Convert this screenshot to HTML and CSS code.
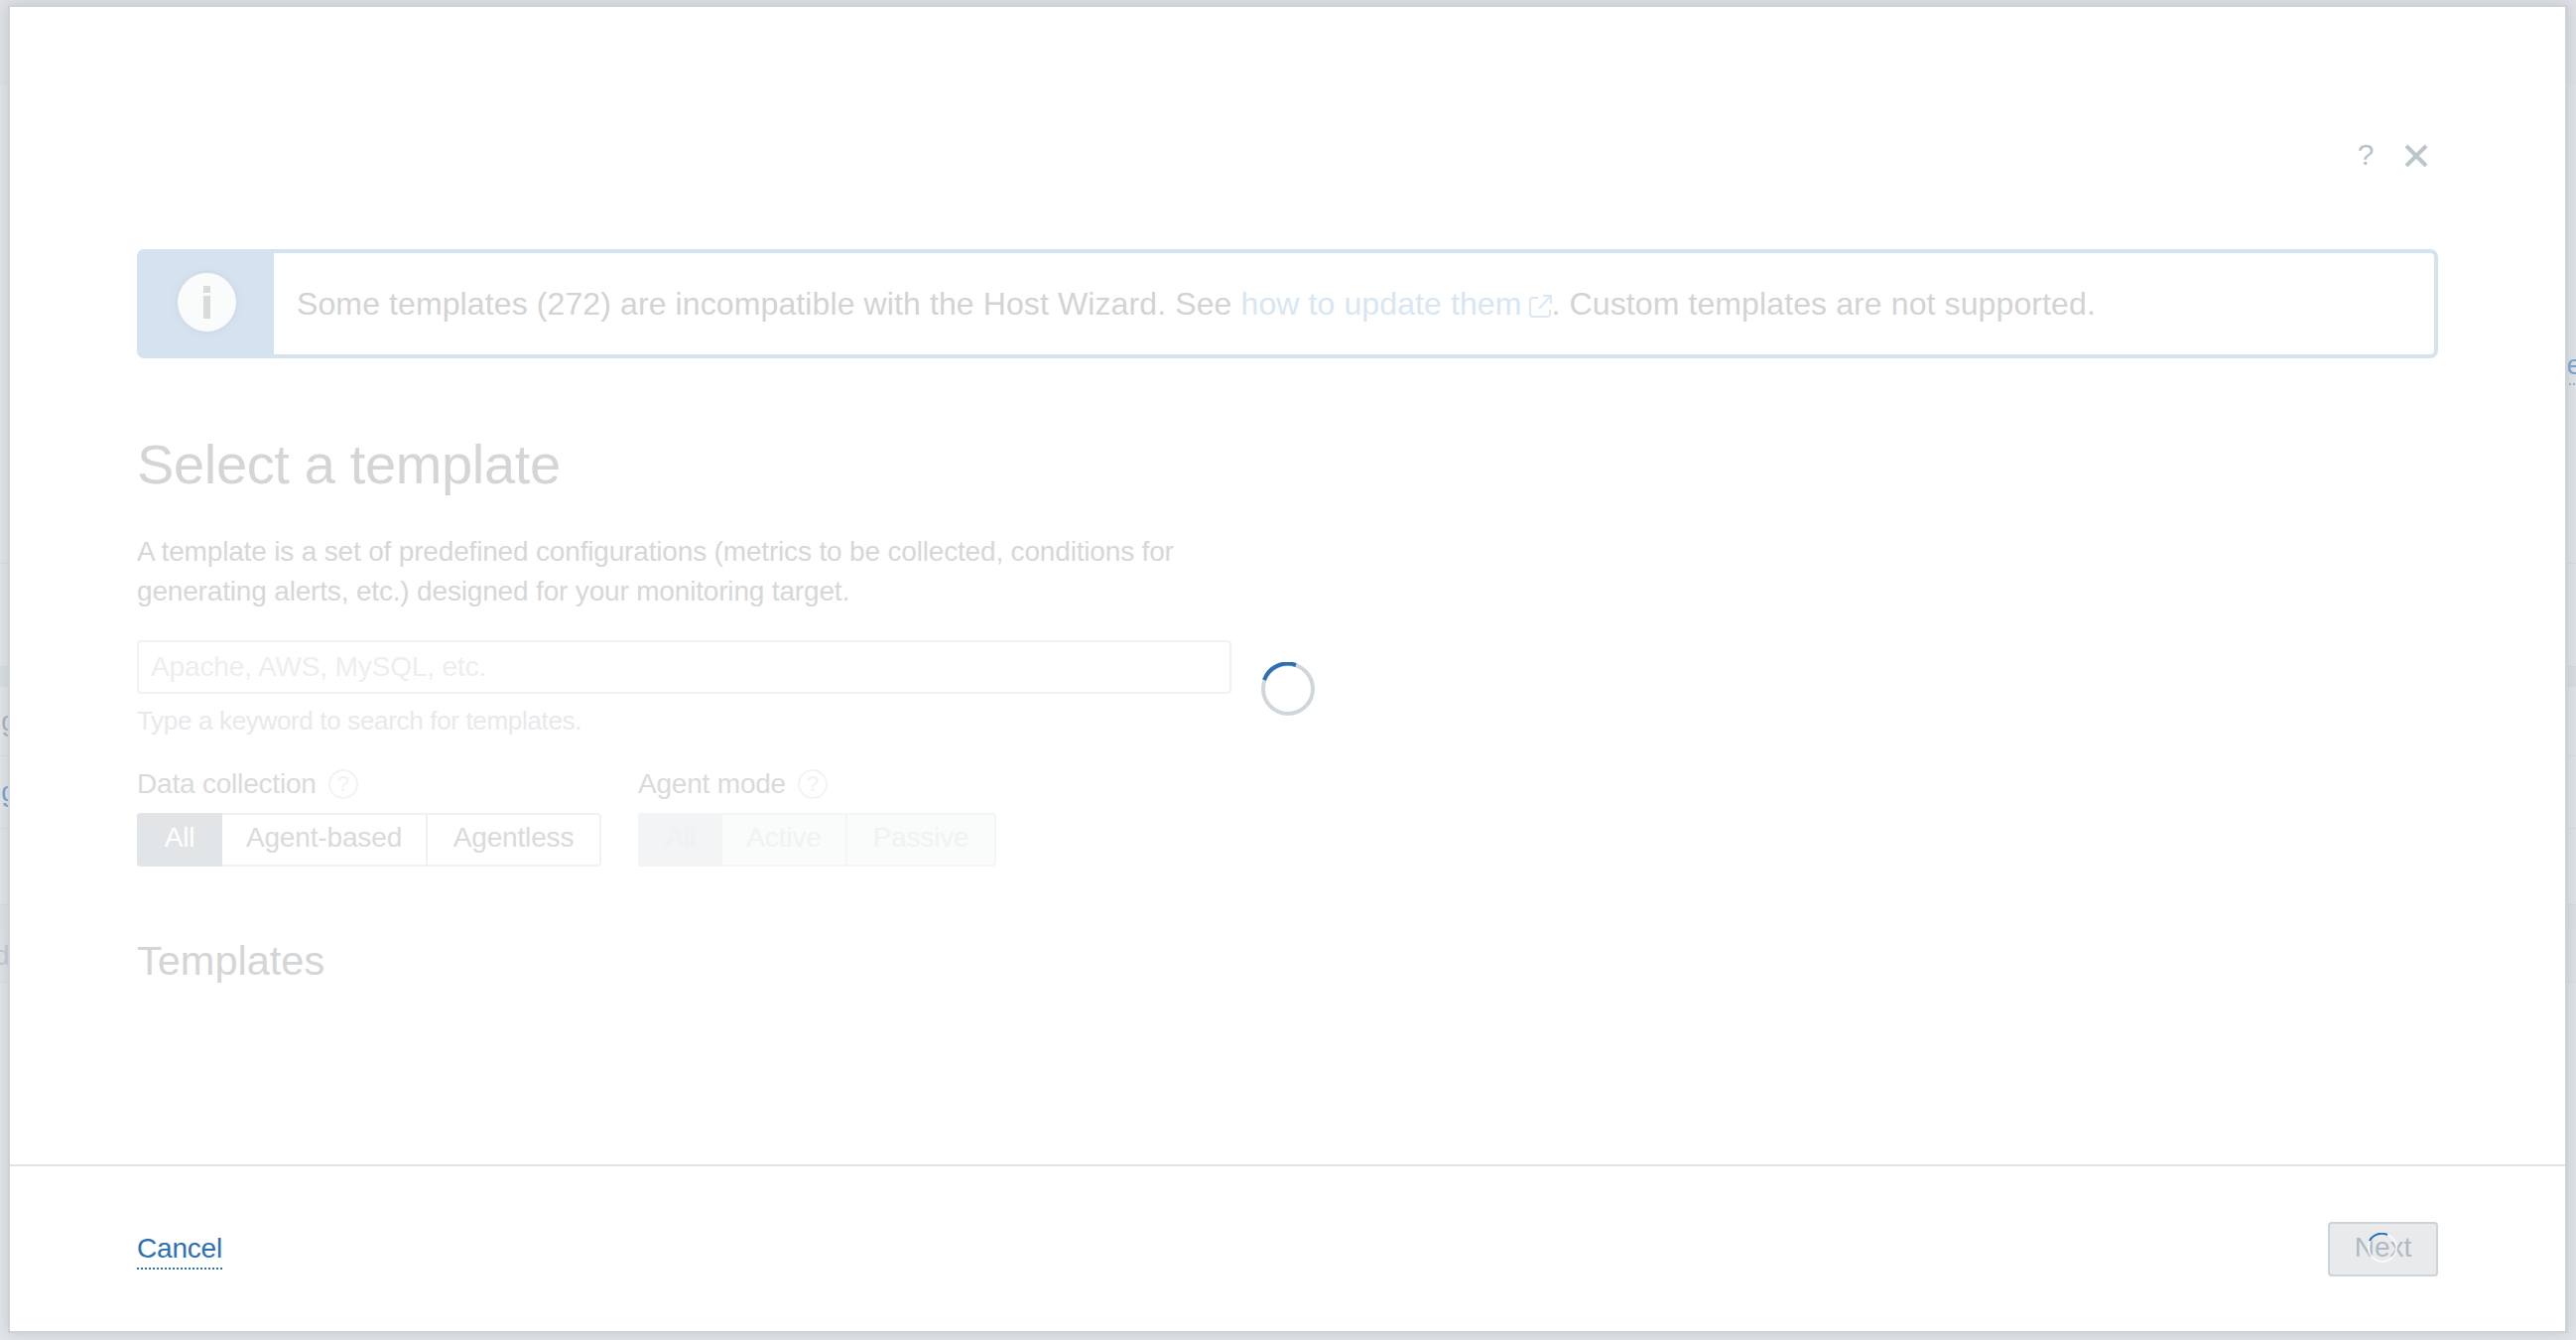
FILE: index.html
```html
<!DOCTYPE html>
<html lang="en">
<head>
<meta charset="utf-8">
<title>Host Wizard</title>
<link rel="stylesheet" href="styles.css">
</head>
<body>
<div class="backdrop">
  <div class="bg-top"></div>
  <div class="bg-row h482"><span class="bg-link-right">e</span></div>
  <div class="bg-row h104"></div>
  <div class="bg-band"></div>
  <div class="bg-row h70"><span class="bg-text-gray">ig</span></div>
  <div class="bg-row h73"><span class="bg-text-blue">ig</span></div>
  <div class="bg-row h77"></div>
  <div class="bg-band2"></div>
  <div class="bg-row h53 bg-shade"><span class="bg-text-pale">d</span></div>
</div>

<div class="modal">
  <div class="modal-body">
    <div class="modal-tools">
      <span class="tool-help">?</span>
      <svg class="tool-close" viewBox="0 0 24 24" width="24" height="24"><path d="M2 2 22 22M22 2 2 22"/></svg>
    </div>

    <div class="banner">
      <div class="banner-strip">
        <div class="banner-icon"><span class="i-dot"></span><span class="i-stem"></span></div>
      </div>
      <div class="banner-text">Some templates (272) are incompatible with the Host Wizard. See <span class="banner-link">how to update them<svg class="ext" viewBox="0 0 24 24" width="24" height="24"><path d="M10 4H5a3 3 0 0 0-3 3v13a3 3 0 0 0 3 3h14a3 3 0 0 0 3-3v-4M11 15 22 3M15 2h8v8"/></svg></span>. Custom templates are not supported.</div>
    </div>

    <h1 class="title">Select a template</h1>
    <p class="intro">A template is a set of predefined configurations (metrics to be collected, conditions for<br>generating alerts, etc.) designed for your monitoring target.</p>

    <div class="search-row">
      <div class="search-col">
        <div class="search-input">Apache, AWS, MySQL, etc.</div>
        <div class="hint">Type a keyword to search for templates.</div>
      </div>
      <svg class="spinner" viewBox="0 0 54 54" width="54" height="54"><circle cx="27" cy="27" r="25" class="spin-track"/><path d="M3 18A25 25 0 0 1 35 3" class="spin-arc"/></svg>
    </div>

    <div class="filters">
      <div class="filter filter-data">
        <div class="filter-label">Data collection<span class="qmark">?</span></div>
        <div class="seg">
          <span class="seg-item seg-on w86">All</span>
          <span class="seg-item w207">Agent-based</span>
          <span class="seg-item seg-last">Agentless</span>
        </div>
      </div>
      <div class="filter">
        <div class="filter-label">Agent mode<span class="qmark">?</span></div>
        <div class="seg seg-off">
          <span class="seg-item seg-on w85">All</span>
          <span class="seg-item w126">Active</span>
          <span class="seg-item seg-last">Passive</span>
        </div>
      </div>
    </div>

    <h2 class="subtitle">Templates</h2>
  </div>

  <div class="modal-foot">
    <a class="cancel" href="#">Cancel</a>
    <div class="next">Next
      <svg class="next-spin" viewBox="0 0 30 30" width="30" height="30"><circle cx="15" cy="15" r="14" class="next-track"/><path d="M2 8A14 14 0 0 1 20 2" class="next-arc"/></svg>
    </div>
  </div>
</div>
</body>
</html>
```
FILE: styles.css
```css
* { box-sizing: border-box; }
html, body { margin: 0; padding: 0; height: 100%; }
body { background: #e2e5e8; font-family: "Liberation Sans", Arial, sans-serif; overflow: hidden; }

/* Dimmed page behind the dialog */
.backdrop { display: flex; flex-direction: column; height: 1350px; }
.bg-top { height: 86px; background: #dfe2e5; }
.bg-row { display: flex; align-items: center; justify-content: space-between; border-bottom: 1px solid #d8dcdf; font-size: 28px; }
.h482 { height: 482px; justify-content: flex-end; align-items: flex-start; padding-top: 266px; }
.h104 { height: 104px; }
.h70 { height: 70px; }
.h73 { height: 73px; }
.h77 { height: 77px; }
.h53 { height: 53px; }
.bg-band { height: 20px; background: #d9dde0; }
.bg-band2 { height: 25px; background: #dde0e3; }
.bg-shade { background: #dfe2e5; }
.bg-link-right { color: #6f9ccb; margin-right: -6px; border-bottom: 2px dotted #8fb2d6; line-height: 32px; padding-bottom: 2px; height: 36px; }
.bg-text-blue { color: #6f9ccb; margin-left: -5px; }
.bg-text-gray { color: #a5adb3; margin-left: -5px; }
.bg-text-pale { color: #c2c7cb; margin-left: -6px; }

/* Dialog */
.modal {
  position: absolute; left: 8px; top: 5px; width: 2580px; height: 1338px;
  display: flex; flex-direction: column;
  background: #fff; border: 2px solid #ccd2d7; border-right-width: 3px;
  box-shadow: 0 0 14px rgba(170, 178, 185, .55);
}
.modal-body { flex: 1; padding: 0 128px; }
.modal-tools { height: 244px; display: flex; justify-content: flex-end; align-items: flex-start; padding-top: 132px; padding-right: 10px; }
.tool-help { font-size: 30px; line-height: 34px; color: #b8c1c7; width: 24px; margin-right: 27px; text-align: center; }
.tool-close { margin-top: 6px; fill: none; stroke: #bcc5c9; stroke-width: 4; }

.banner { display: flex; height: 110px; border: 4px solid #d5e2ef; border-radius: 8px; }
.banner-strip { margin: -4px 0 -4px -4px; width: 138px; padding: 0 0 3px 3px; background: #d5e2ef; border-radius: 8px 0 0 8px; display: flex; align-items: center; justify-content: center; }
.banner-icon { width: 59px; height: 59px; border-radius: 50%; background: #fafbfb; box-shadow: 0 0 6px rgba(190,200,210,.5); display: flex; flex-direction: column; align-items: center; padding-top: 13px; }
.i-dot { width: 7px; height: 7px; background: #d8dbdc; }
.i-stem { width: 7px; height: 23px; background: #d8dbdc; margin-top: 3px; }
.banner-text { padding-left: 23px; font-size: 32px; letter-spacing: .11px; line-height: 102px; color: #d3d3d3; white-space: nowrap; }
.banner-link { color: #d8e6f3; }
.ext { fill: none; stroke: #dce8f4; stroke-width: 2; vertical-align: -3px; margin-left: 6px; }

.title { margin: 72px 0 0; font-size: 56px; letter-spacing: -.35px; line-height: 70px; font-weight: 400; color: #d4d5d7; }
.intro { margin: 33px 0 0; font-size: 28px; letter-spacing: -.17px; line-height: 40px; color: #d6d7d8; }

.search-row { display: flex; margin-top: 29px; }
.search-col { width: 1103px; }
.search-input { height: 54px; border: 2px solid #f0f1f2; border-radius: 4px; padding-left: 12px; font-size: 28px; letter-spacing: -.13px; line-height: 50px; color: #eceef0; }
.hint { margin-top: 11px; font-size: 26px; letter-spacing: -.33px; line-height: 32px; color: #e7e9eb; }
.spinner { margin: 22px 0 0 30px; fill: none; }
.spin-track { stroke: #d0d7da; stroke-width: 4; }
.spin-arc { stroke: #2e70b6; stroke-width: 4; }

.filters { display: flex; margin-top: 28px; }
.filter-data { width: 505px; }
.filter-label { display: flex; align-items: center; font-size: 28px; letter-spacing: -.2px; line-height: 40px; color: #d9dadb; }
.qmark { width: 30px; height: 30px; margin-left: 12px; border: 2px solid #f2f3f4; border-radius: 50%; font-size: 22px; line-height: 26px; text-align: center; color: #f0f1f2; }
.seg { display: flex; height: 54px; margin-top: 9px; border: 2px solid #f0f1f2; border-radius: 4px; font-size: 28px; letter-spacing: -.15px; line-height: 46px; color: #d8dadc; width: 468px; }
.seg-off { width: 361px; background: #fafbfb; color: #f1f2f3; border-color: #f4f5f6; }
.seg-off .seg-item { border-right-color: #f4f5f6; }
.seg-item { text-align: center; border-right: 2px solid #f0f1f2; }
.seg-item.seg-last { flex: 1; border-right: 0; }
.seg-on { margin: -2px 0 -2px -2px; line-height: 50px; background: #e2e5e8; color: #fff; border-right: 0; border-radius: 4px 0 0 4px; }
.seg-off .seg-on { background: #f3f4f6; color: #f0f1f2; border-right: 0; }
.w86 { width: 86px; }
.w207 { width: 207px; }
.w85 { width: 85px; }
.w126 { width: 126px; }

.subtitle { margin: 71px 0 0; font-size: 41.5px; line-height: 48px; font-weight: 400; color: #d4d5d7; }

.modal-foot { height: 168px; border-top: 2px solid #e0e4e7; padding: 56px 128px 0; display: flex; justify-content: space-between; align-items: flex-start; }
.cancel { font-size: 28px; letter-spacing: -.2px; line-height: 32px; margin-top: 11px; color: #2d6fb5; text-decoration: none; border-bottom: 2px dotted #2d6fb5; padding-bottom: 3px; }
.next { position: relative; width: 111px; height: 55px; background: #e9eaeb; border: 2px solid #cdd4d9; border-radius: 4px; font-size: 28px; line-height: 47px; text-align: center; color: #aeb9c1; }
.next-spin { position: absolute; left: 38px; top: 9px; fill: none; }
.next-track { stroke: rgba(255,255,255,.75); stroke-width: 2; }
.next-arc { stroke: #2e70b6; stroke-width: 2; }
```
